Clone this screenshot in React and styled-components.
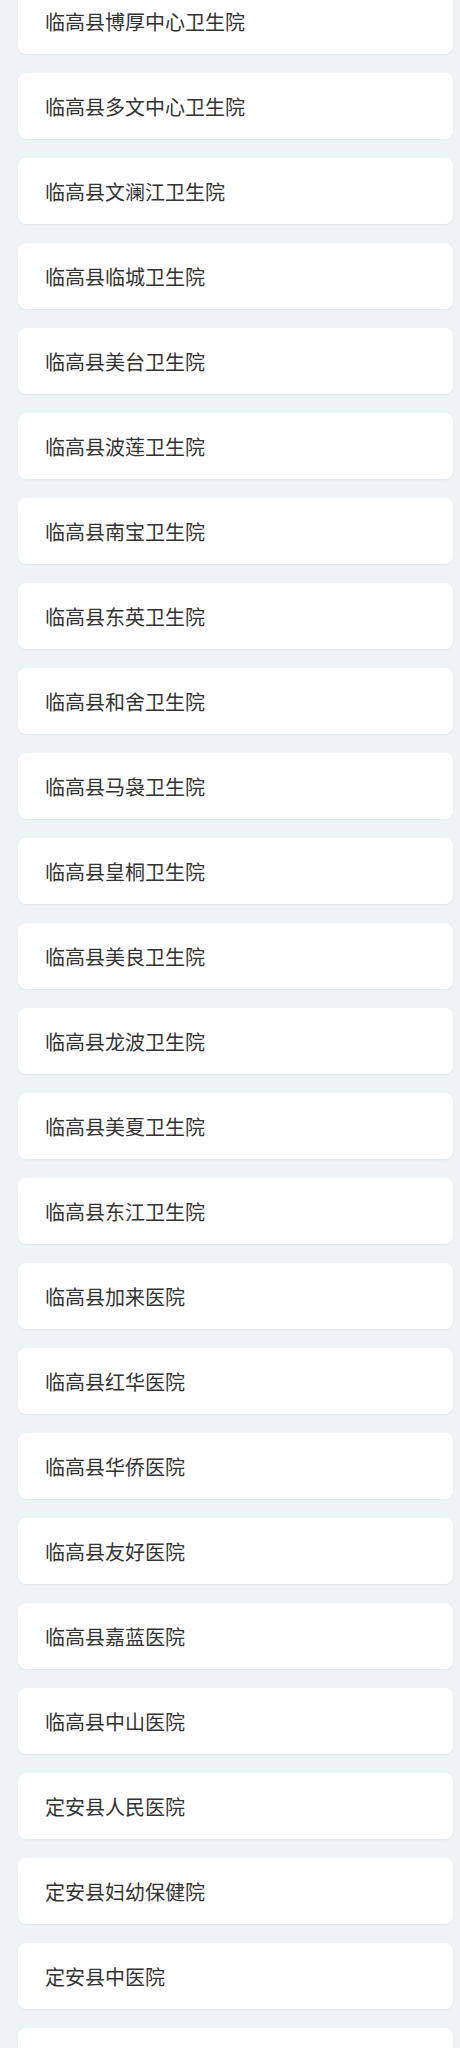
import { createGlobalStyle } from 'styled-components';
import styled from 'styled-components';

const GlobalStyle = createGlobalStyle`
  html, body {
    margin: 0;
    padding: 0;
    background: #eef3f6;
    font-family: "Noto Sans CJK SC", "Liberation Sans", sans-serif;
  }
`;

const List = styled.div`
  display: flex;
  flex-direction: column;
  gap: 19px;
  margin-top: -12px;
  padding: 0 7px 20px 18px;
`;

const Card = styled.div`
  display: flex;
  align-items: center;
  height: 66px;
  padding: 0 26px 0 27px;
  background: #fff;
  border-radius: 8px;
  box-shadow: 0 1px 2px rgba(20, 40, 60, 0.06);
  color: #333;
  font-size: 20px;
  box-sizing: border-box;
`;

const names = [
  '临高县博厚中心卫生院',
  '临高县多文中心卫生院',
  '临高县文澜江卫生院',
  '临高县临城卫生院',
  '临高县美台卫生院',
  '临高县波莲卫生院',
  '临高县南宝卫生院',
  '临高县东英卫生院',
  '临高县和舍卫生院',
  '临高县马袅卫生院',
  '临高县皇桐卫生院',
  '临高县美良卫生院',
  '临高县龙波卫生院',
  '临高县美夏卫生院',
  '临高县东江卫生院',
  '临高县加来医院',
  '临高县红华医院',
  '临高县华侨医院',
  '临高县友好医院',
  '临高县嘉蓝医院',
  '临高县中山医院',
  '定安县人民医院',
  '定安县妇幼保健院',
  '定安县中医院',
  '定安县精神病医院',
  '定安县疾病预防控制中心',
];

function App() {
  return (
    <>
      <GlobalStyle />
      <List>
        {names.map((n) => (
          <Card key={n}>{n}</Card>
        ))}
      </List>
    </>
  );
}

export default App;
